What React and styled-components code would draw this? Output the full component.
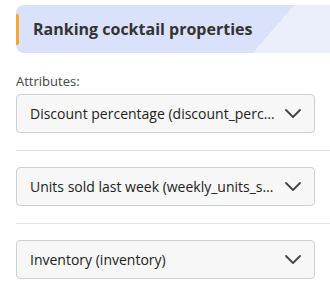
import React from 'react';
import styled, { createGlobalStyle } from 'styled-components';

const GlobalStyle = createGlobalStyle`
    body {
        margin: 0;
        background: #fff;
        font-family: 'Open Sans', 'Liberation Sans', sans-serif;
    }
`;

const Panel = styled.div`
    width: 330px;
    padding: 5px 0 0 16px;
    box-sizing: border-box;
`;

const Header = styled.div`
    display: flex;
    align-items: center;
    height: 48px;
    border-radius: 8px 0 0 8px;
    background: linear-gradient(131deg, #d9e2fa 210px, #ebeffc 210px);
`;

const Accent = styled.span`
    width: 3px;
    height: 31px;
    background: #f7a731;
    border-radius: 0 2px 2px 0;
`;

const Title = styled.h2`
    margin: 0 0 0 14px;
    font-size: 16px;
    font-weight: 700;
    color: #333;
`;

const Label = styled.div`
    margin-top: 19px;
    font-size: 13px;
    color: #444;
    line-height: 18px;
`;

const Select = styled.div`
    display: flex;
    align-items: center;
    width: 299px;
    height: 39px;
    box-sizing: border-box;
    margin-top: ${(p) => p.$top}px;
    padding: 0 13px;
    border: 1px solid #cfcfcf;
    border-radius: 4px;
    background: #f7f7f7;
    font-size: 14px;
    color: #222;
`;

const Value = styled.span`
    flex: 1;
    min-width: 0;
    white-space: nowrap;
    overflow: hidden;
    text-overflow: ellipsis;
    padding-right: 8px;
`;

const Divider = styled.hr`
    margin: 17px 0 0;
    border: none;
    border-top: 1px solid #e3e3e3;
`;

const Chevron = () => (
    <svg width='16' height='9' viewBox='0 0 16 9' fill='none'>
        <polyline
            points='1,1 8,8 15,1'
            stroke='#444'
            strokeWidth='1.8'
            strokeLinecap='round'
            strokeLinejoin='round'
        />
    </svg>
);

const attributes = [
    'Discount percentage (discount_percentage)',
    'Units sold last week (weekly_units_sold)',
    'Inventory (inventory)',
];

const App = () => {
    return (
        <Panel>
            <GlobalStyle />
            <Header>
                <Accent />
                <Title>Ranking cocktail properties</Title>
            </Header>
            <Label>Attributes:</Label>
            {attributes.map((a, i) => (
                <React.Fragment key={a}>
                    {i > 0 && <Divider />}
                    <Select $top={i === 0 ? 4 : 16}>
                        <Value>{a}</Value>
                        <Chevron />
                    </Select>
                </React.Fragment>
            ))}
        </Panel>
    );
};

export default App;
